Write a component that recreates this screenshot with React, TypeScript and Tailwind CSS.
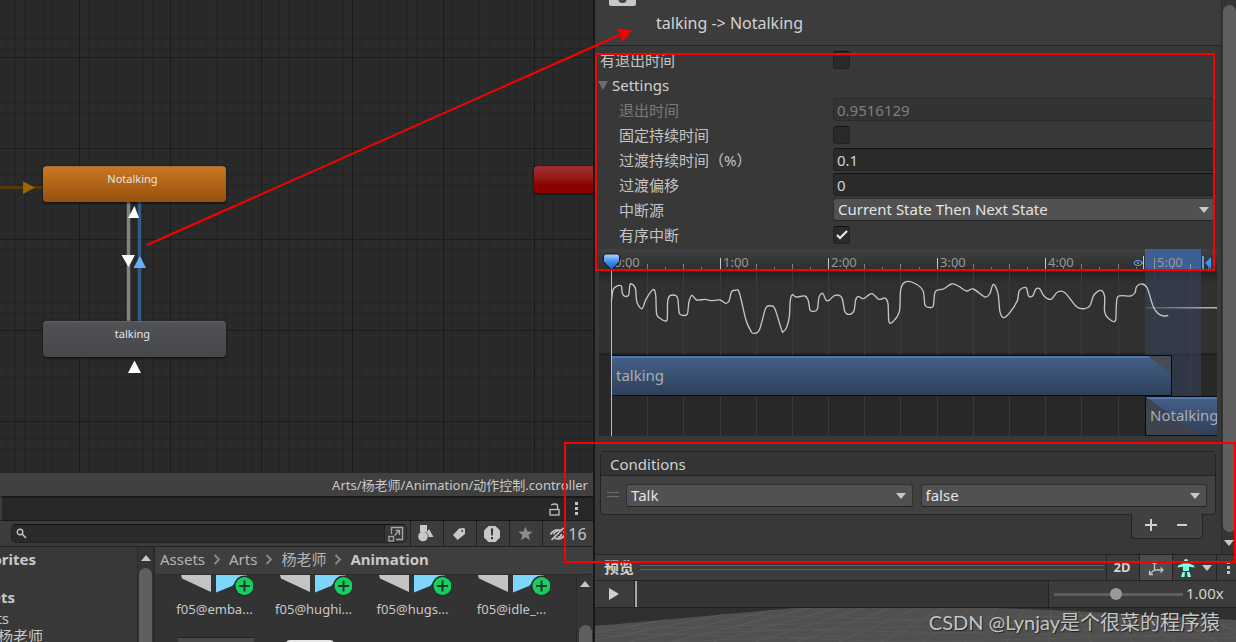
import type { ReactNode } from 'react';

const UI_FONT = "font-['Noto_Sans','Noto_Sans_CJK_SC',sans-serif]";

const curvePoints = [
  [64, 185], [69, 150], [78, 140], [90, 136], [95, 140], [97, 160], [105, 169], [116, 165], [119, 140], [123, 131],
  [136, 145], [141, 187], [156, 206], [168, 178], [189, 149], [197, 165], [200, 222], [212, 236], [227, 243], [232, 235],
  [233, 185], [240, 167], [258, 167], [264, 180], [268, 220], [280, 226], [292, 222], [297, 185], [306, 166], [320, 180],
  [345, 178], [362, 182], [390, 180], [407, 190], [417, 183], [425, 155], [437, 151], [448, 158], [468, 240], [483, 274],
  [492, 280], [508, 270], [527, 205], [541, 198], [554, 205], [575, 270], [580, 275], [590, 262], [598, 230], [601, 180],
  [608, 164], [618, 171], [645, 168], [655, 182], [660, 210], [670, 214], [682, 208], [687, 172], [698, 160], [708, 180],
  [717, 181], [735, 166], [755, 172], [765, 215], [778, 223], [792, 212], [797, 180], [805, 169], [820, 176], [845, 161],
  [867, 178], [885, 174], [894, 190], [897, 245], [910, 244], [928, 215], [932, 150], [943, 128], [965, 126], [998, 150],
  [1005, 195], [1018, 202], [1030, 198], [1036, 155], [1060, 147], [1085, 132], [1105, 138], [1130, 153], [1150, 147], [1185, 171],
  [1200, 160], [1210, 133], [1224, 160], [1230, 215], [1241, 233], [1260, 217], [1282, 182], [1288, 152], [1308, 143], [1316, 168],
  [1328, 168], [1338, 147], [1350, 147], [1362, 168], [1383, 178], [1403, 156], [1425, 158], [1460, 200], [1485, 206], [1500, 197],
  [1512, 165], [1533, 151], [1544, 170], [1544, 215], [1555, 235], [1576, 243], [1579, 200], [1585, 169], [1622, 168], [1635, 158],
  [1640, 140], [1657, 132], [1672, 145], [1690, 200], [1705, 221], [1722, 228], [1735, 226],
];

const smoothPath = (points: number[][]) => {
  let d = `M${points[0][0]} ${points[0][1]}`;
  for (let i = 0; i < points.length - 1; i++) {
    const p0 = points[Math.max(i - 1, 0)];
    const p1 = points[i];
    const p2 = points[i + 1];
    const p3 = points[Math.min(i + 2, points.length - 1)];
    d += `C${p1[0] + (p2[0] - p0[0]) / 6} ${p1[1] + (p2[1] - p0[1]) / 6} ${p2[0] - (p3[0] - p1[0]) / 6} ${p2[1] - (p3[1] - p1[1]) / 6} ${p2[0]} ${p2[1]}`;
  }
  return d;
};

const Kebab = () => (
  <svg width="4" height="14" viewBox="0 0 4 14" fill="#c4c4c4">
    <rect width="3" height="3" />
    <rect y="5" width="3" height="3" />
    <rect y="10" width="3" height="3" />
  </svg>
);

const StateNode = ({ name, className }: { name: string; className: string }) => (
  <div
    className={`absolute left-[43px] h-9 w-[183px] rounded border-t border-white/15 bg-gradient-to-b pr-1 text-center text-[11px] leading-6 text-[#e6e6e6] shadow-[0_1px_3px_rgba(0,0,0,0.7)] ${className}`}
  >
    {name}
  </div>
);

const AnimatorGraph = () => (
  <div className="relative min-h-0 flex-1 overflow-hidden bg-[#2a2a2a]">
    <svg className="absolute inset-0 h-full w-full">
      <defs>
        <pattern id="grid" x="79" y="57" width="91" height="91" patternUnits="userSpaceOnUse">
          <path
            d="M9.5 0V91M18.5 0V91M27.5 0V91M36.5 0V91M46.5 0V91M55.5 0V91M64.5 0V91M73.5 0V91M82.5 0V91M0 9.5H91M0 18.5H91M0 27.5H91M0 36.5H91M0 46.5H91M0 55.5H91M0 64.5H91M0 73.5H91M0 82.5H91"
            stroke="#252525"
          />
          <path d="M.5 0V91M0 .5H91" stroke="#1c1c1c" />
        </pattern>
      </defs>
      <rect width="100%" height="100%" fill="url(#grid)" />
      <path d="M0 187.5H43" stroke="#513806" strokeWidth="3" />
      <path d="M23 181.5L35 187.5L23 194z" fill="#9a6400" />
      <path d="M128.5 200V322" stroke="#838383" strokeWidth="3.5" />
      <path d="M139.5 200V322" stroke="#335a85" strokeWidth="3.5" />
      <path d="M134.5 206L139 218H128z" fill="#fff" />
      <path d="M121.5 255H135L128.5 267z" fill="#fff" />
      <path d="M140 256L146 268H133.5z" fill="#66b0ff" />
      <path d="M134.5 360.5L141 373H128z" fill="#fff" />
    </svg>
    <StateNode name="Notalking" className="top-[166px] from-[#c97620] to-[#96510d]" />
    <StateNode name="talking" className="top-[321px] from-[#505256] to-[#45474a]" />
    <div className="absolute left-[534px] top-[166px] h-[27px] w-[183px] rounded border-t border-white/15 bg-gradient-to-b from-[#a03030] to-[#8b0000] to-70% shadow-[0_1px_3px_rgba(0,0,0,0.7)]" />
  </div>
);

const ToolButton = ({ label, children }: { label: string; children: ReactNode }) => (
  <button aria-label={label} className="flex w-[33px] items-center justify-center border-l border-[#232323] pr-[2px]">
    {children}
  </button>
);

const ProjectToolbar = () => (
  <div className="flex h-[26px] items-stretch border-b border-[#232323] bg-[#3c3c3c] pl-[11px]">
    <div className="my-[3px] mr-[3px] flex flex-1 items-center rounded-[5px] border border-t-[#101010] border-[#222] bg-[#2a2a2a]">
      <svg className="ml-1 shrink-0" width="11" height="11" viewBox="0 0 11 11" fill="none" stroke="#c4c4c4">
        <circle cx="4" cy="4" r="2.8" strokeWidth="1.4" />
        <path d="M6 6L10 10" strokeWidth="1.6" />
      </svg>
      <input aria-label="Search" className="min-w-0 flex-1 bg-transparent px-1 text-sm outline-none" />
      <button aria-label="Open search window" className="flex h-full w-[22px] items-center justify-center rounded-r border-l border-[#222] bg-[#383838]">
        <svg width="16" height="16" viewBox="0 0 16 16" fill="none" stroke="#a8a8a8" strokeWidth="1.3">
          <path d="M3.5 8V1.5H14.5V13.5H8" />
          <rect x="1" y="10.5" width="4.5" height="4.5" />
          <path d="M6.5 9.5L11.5 4.5M7.5 4.5H11.5V9" />
        </svg>
      </button>
    </div>
    <ToolButton label="Search by type">
      <svg width="16" height="17" viewBox="0 0 16 17" fill="#c8c8c8">
        <rect x="2" y="0" width="7" height="7" />
        <circle cx="5" cy="11.5" r="4.8" />
        <path d="M11 4L15.5 12H10.5A6 6 0 0 0 8.5 7.5z" />
      </svg>
    </ToolButton>
    <ToolButton label="Search by label">
      <svg width="14" height="14" viewBox="0 0 14 14" fill="#c8c8c8">
        <path fillRule="evenodd" d="M7 1.5L12 1L13 2V7L5.5 13L1 8zM10.2 3A1 1 0 1 0 10.3 5A1 1 0 1 0 10.2 3z" />
      </svg>
    </ToolButton>
    <ToolButton label="Search by import log">
      <svg width="18" height="18" viewBox="0 0 18 18">
        <path d="M5.5 1H12.5L17 5.5V12.5L12.5 17H5.5L1 12.5V5.5z" fill="#c8c8c8" />
        <path d="M7.8 3.5H10.2L9.8 10.5H8.2zM8 12H10V14.2H8z" fill="#333" />
      </svg>
    </ToolButton>
    <ToolButton label="Save search">
      <svg width="15" height="15" viewBox="0 0 15 15" fill="#8c8c8c">
        <path d="M7.5 .5L9.4 5.5L14.7 5.7L10.6 9L12 14.2L7.5 11.3L3 14.2L4.4 9L.3 5.7L5.6 5.5z" />
      </svg>
    </ToolButton>
    <button className="flex w-[51px] items-center justify-center gap-px border-l border-[#232323] text-base leading-6 text-[#c4c4c4]">
      <svg width="18" height="14" viewBox="0 0 18 14" fill="none" stroke="#c4c4c4" strokeWidth="1.7">
        <path d="M1.5 7.5C4 3.5 8 2 12 3.5M5.5 11C10 13 14 11 16.5 7C16 6 15.2 5 14.5 4.5" />
        <path d="M5 7.5C5 5.5 7 4 9.5 4M9 10.5C11.5 10 12.5 8.500 12.5 7" />
        <path d="M2.5 13L14.5 1" />
      </svg>
      16
    </button>
  </div>
);

const Breadcrumbs = () => (
  <nav className="flex h-7 items-center gap-[9px] border-b border-[#2c2c2c] bg-[#3e3e3e] pb-[3px] pl-[5px] text-[15px] leading-6 text-[#b4b4b4]">
    {['Assets', 'Arts', '杨老师', 'Animation'].map((name, i) => (
      <span key={name} className="flex items-center gap-[9px]">
        {i > 0 && (
          <svg width="6" height="11" viewBox="0 0 6 11" fill="none" stroke="#8e8e8e" strokeWidth="1.8">
            <path d="M.5 1L5 5.5L.5 10" />
          </svg>
        )}
        <a href="#" className={i === 3 ? 'font-bold text-[#c8c8c8]' : ''}>{name}</a>
      </span>
    ))}
  </nav>
);

const AssetItem = ({ name }: { name: string }) => (
  <div className="flex w-[99px] shrink-0 flex-col items-center">
    <svg width="76" height="23" viewBox="0 0 76 23">
      <path d="M4 0H34V17L5 3.5z" fill="#c4c4c4" />
      <path d="M39 0H70L59 7L55 11L39 17.5z" fill="#7fd6fd" />
      <circle cx="67.5" cy="11" r="10.5" fill="#2d2d2d" />
      <circle cx="67.5" cy="11" r="9" fill="#16cf60" />
      <path d="M67.5 5.5V16.5M62 11H73" stroke="#1f3a29" strokeWidth="2" />
    </svg>
    <span className="text-[13px] leading-[22px] text-[#c8c8c8]">{name}</span>
  </div>
);

const ProjectPanel = () => (
  <div className="flex h-[95px] bg-[#383838] text-[15px] text-[#c8c8c8]">
    <div className="w-[137px] overflow-hidden whitespace-nowrap">
      <div className="flex h-6 w-[36px] items-center justify-end overflow-hidden font-bold">Favorites</div>
      <div className="mt-[14px] flex h-6 w-[15px] items-center justify-end overflow-hidden font-bold">Assets</div>
      <div className="flex h-[17px] w-[9px] items-center justify-end overflow-hidden leading-4">Arts</div>
      <div className="flex h-5 w-[43px] items-center justify-end overflow-hidden leading-5">杨老师</div>
    </div>
    <div className="flex w-[18px] flex-col items-center border-l border-r-2 border-[#2a2a2a] bg-[#353535]">
      <svg className="mt-2" width="10" height="6" viewBox="0 0 10 6" fill="#c8c8c8"><path d="M5 0L10 6H0z" /></svg>
      <div className="mt-[7px] w-[13px] flex-1 rounded-t-full bg-[#5f5f5f]" />
    </div>
    <div className="flex min-w-0 flex-1 flex-col">
      <Breadcrumbs />
      <div className="flex flex-1 overflow-hidden bg-[#333]">
        <div className="min-w-0 flex-1 overflow-hidden pl-[10px]">
          <div className="flex">
            {['f05@emba...', 'f05@hughi...', 'f05@hugs...', 'f05@idle_...'].map((name) => (
              <AssetItem key={name} name={name} />
            ))}
          </div>
          <div className="mt-[17px] flex items-start gap-8 pl-[13px]">
            <div className="h-2 w-[76px] border-t border-[#222] bg-[#4b4b4b]" />
            <div className="mt-[3px] h-2 w-[48px] rounded-t bg-[#e8e8e8]" />
          </div>
        </div>
        <div className="flex w-[17px] flex-col items-center border-l border-[#2a2a2a] bg-[#353535]">
          <svg className="mt-[6px] shrink-0" width="10" height="6" viewBox="0 0 10 6" fill="#c8c8c8"><path d="M5 0L10 6H0z" /></svg>
          <div className="mt-[38px] h-8 w-[13px] shrink-0 rounded-full bg-[#5f5f5f]" />
        </div>
      </div>
    </div>
  </div>
);

const LeftColumn = () => (
  <div className="flex min-w-0 flex-[593] flex-col">
    <AnimatorGraph />
    <div className="flex h-[23px] items-center justify-end bg-[#404040] pr-[5px] pt-[2px] text-[13px] text-[#c8c8c8]">
      Arts/杨老师/Animation/动作控制.controller
    </div>
    <div className="flex h-[25px] items-center justify-end gap-[15px] border-l-2 border-t-2 border-b border-[#191919] border-l-[#3c3c3c] bg-[#282828] pr-[14px]">
      <button aria-label="Lock">
        <svg width="11" height="13" viewBox="0 0 11 13" fill="none" stroke="#c4c4c4" strokeWidth="1.3">
          <rect x="1" y="6.5" width="9" height="5.5" />
          <path d="M2.5 2.5C2.5 .5 8.5 .5 8.5 2.5V6" />
        </svg>
      </button>
      <button aria-label="Panel menu"><Kebab /></button>
    </div>
    <ProjectToolbar />
    <ProjectPanel />
  </div>
);

const Row = ({ id, label, indent = true, muted = false, children }: { id: string; label: string; indent?: boolean; muted?: boolean; children: ReactNode }) => (
  <div className="flex h-[25px] items-center">
    <label
      htmlFor={id}
      className={`w-[238px] shrink-0 leading-6 ${indent ? 'pl-6' : 'pl-[5px]'} ${muted ? 'text-[#7a7a7a]' : 'text-[#c4c4c4]'}`}
    >
      {label}
    </label>
    {children}
  </div>
);

const Check = ({ id, checked = false }: { id: string; checked?: boolean }) => (
  <span className="relative flex">
    <input
      id={id}
      type="checkbox"
      defaultChecked={checked}
      className="peer h-[18px] w-[17px] appearance-none rounded-[3px] border border-t-[#111] border-[#222] bg-[#2a2a2a]"
    />
    <svg className="pointer-events-none absolute left-[3px] top-1 hidden peer-checked:block" width="12" height="10" viewBox="0 0 12 10" fill="none" stroke="#eee" strokeWidth="2">
      <path d="M1 5L4 8L11 1" />
    </svg>
  </span>
);

const Field = ({ id, value, disabled = false }: { id: string; value: string; disabled?: boolean }) => (
  <input
    id={id}
    defaultValue={value}
    disabled={disabled}
    className="h-[23px] min-w-0 flex-1 rounded-[3px] border border-t-[#111] border-[#222] bg-[#2a2a2a] px-[3px] text-[#d2d2d2] outline-none disabled:border-[#2a2a2a] disabled:bg-[#333] disabled:text-[#7f7f7f]"
  />
);

const Dropdown = ({ id, label, value }: { id: string; label?: string; value: string }) => (
  <div className="relative min-w-0 flex-1">
    <select
      id={id}
      aria-label={label}
      className="block h-[23px] w-full appearance-none rounded-[3px] border border-[#303030] border-b-[#242424] bg-[#515151] px-1 pb-px leading-5 text-[#e4e4e4] outline-none"
    >
      <option>{value}</option>
    </select>
    <svg className="pointer-events-none absolute right-[7px] top-[9px]" width="10" height="6" viewBox="0 0 10 6" fill="#c8c8c8">
      <path d="M0 0H10L5 6z" />
    </svg>
  </div>
);

const Timeline = () => {
  const ticks = Array.from({ length: 34 }, (_, i) => Math.round(12 + i * 18.09));
  return (
    <svg className="block h-[187px] w-full" fontSize="13" fill="none">
      <defs>
        <linearGradient id="ruler" x2="0" y2="1">
          <stop stopColor="#404040" />
          <stop offset="1" stopColor="#2c2c2c" />
        </linearGradient>
        <linearGradient id="clip" x2="0" y2="1">
          <stop stopColor="#456189" />
          <stop offset="1" stopColor="#2e405a" />
        </linearGradient>
        <linearGradient id="shade" x2="0" y2="1">
          <stop stopColor="#222" />
          <stop offset="1" stopColor="#303030" />
        </linearGradient>
        <linearGradient id="head" x2="0" y2="1">
          <stop stopColor="#b6d6ff" />
          <stop offset=".5" stopColor="#3b8bf0" />
          <stop offset="1" stopColor="#0064e0" />
        </linearGradient>
        <linearGradient id="fade">
          <stop stopColor="#bbb" stopOpacity=".2" />
          <stop offset="1" stopColor="#bbb" />
        </linearGradient>
      </defs>
      <rect width="100%" height="187" fill="#282828" />
      <rect width="100%" height="22" fill="url(#ruler)" />
      <rect y="22" width="100%" height="83" fill="#303030" />
      <rect y="22" width="100%" height="12" fill="url(#shade)" />
      <rect y="104" width="100%" height="3" fill="#222" />
      {ticks.map((x, i) => (
        <g key={x}>
          {i > 0 && i % 2 === 0 && <path d={`M${x + 0.5} 22V187`} stroke="#3b3b3b" />}
          <path d={`M${x + 0.5} ${i % 6 === 0 ? 9 : i % 2 === 0 ? 15 : 18}V21`} stroke={i % 6 === 0 ? '#c8c8c8' : '#7c7c7c'} />
        </g>
      ))}
      <rect x="546" width="56" height="22" fill="#3d5f94" />
      <rect x="546" y="22" width="56" height="165" fill="#35465f" fillOpacity=".5" />
      <path d="M555.5 9V21M573.5 18V21M591.5 15V21" stroke="#999" />
      {[0, 1, 2, 3, 4, 5].map((n) => (
        <text key={n} x={Math.round(15 + n * 108.5)} y="18" fill="#979797">{n}:00</text>
      ))}
      <rect x="546" y="58" width="72" height="1.5" fill="url(#fade)" />
      <g transform="translate(-9 -9) scale(.3333)">
        <path d={smoothPath(curvePoints)} stroke="#c6c6c6" strokeWidth="4" />
      </g>
      <rect x="12" y="106" width="561" height="41" fill="#080a0e" />
      <rect x="13" y="107" width="559" height="39" fill="url(#clip)" />
      <rect x="13" y="107" width="559" height="2" fill="#5078ae" />
      <path d="M549 107H572V125z" fill="#474c54" />
      <rect x="546" y="147" width="100%" height="40" fill="#080a0e" />
      <rect x="547" y="148" width="100%" height="38" fill="url(#clip)" />
      <rect x="547" y="148" width="100%" height="2" fill="#5078ae" />
      <path d="M547 148L602 186H547z" fill="#3d4450" />
      <g fontSize="15" fill="#a9adb4">
        <text x="17" y="132">talking</text>
        <text x="551" y="172">Notalking</text>
      </g>
      <path d="M12.5 20V187" stroke="#bdbdbd" />
      <path d="M6 5H19L20.5 7V12.5L12.5 21L4.5 12.5V7z" fill="url(#head)" stroke="#101722" />
      <ellipse cx="539" cy="14" rx="4" ry="2.5" stroke="#64a8f5" />
      <circle cx="539" cy="14" r="1" fill="#64a8f5" />
      <path d="M543 14H545" stroke="#64a8f5" strokeWidth="1.5" />
      <path d="M544.5 7V20" stroke="#a8ccf8" />
      <path d="M604 7V21" stroke="#80b8ff" strokeWidth="1.5" />
      <path d="M612.5 7V21L605.5 14z" fill="#3f93f5" stroke="#101722" strokeWidth=".6" />
    </svg>
  );
};

const Conditions = () => (
  <section className="mt-[15px] px-[5px]">
    <div className="rounded border border-[#242424] bg-[#414141]">
      <h2 className="h-6 border-b border-[#242424] bg-[#353535] pl-[9px] leading-6">Conditions</h2>
      <div className="flex h-[38px] items-center gap-2 pr-2">
        <svg className="ml-[6px] -mr-px shrink-0" width="12" height="6" viewBox="0 0 12 6" stroke="#6c6c6c">
          <path d="M0 .5H12M0 4.5H12" />
        </svg>
        <Dropdown id="parameter" label="Parameter" value="Talk" />
        <Dropdown id="value" label="Value" value="false" />
      </div>
    </div>
    <div className="relative -mt-px ml-auto mr-[13px] flex h-[25px] w-[72px] items-center justify-center gap-[19px] rounded-b border border-t-0 border-[#242424] bg-[#414141] pb-[2px] pr-[2px]">
      <button aria-label="Add condition">
        <svg width="12" height="12" viewBox="0 0 12 12" stroke="#d0d0d0" strokeWidth="2"><path d="M0 6H12M6 0V12" /></svg>
      </button>
      <button aria-label="Remove condition">
        <svg width="12" height="12" viewBox="0 0 12 12" stroke="#d0d0d0" strokeWidth="2"><path d="M1 6H11" /></svg>
      </button>
    </div>
  </section>
);

const floorRays = Array.from({ length: 81 }, (_, i) => -1100 + i * 42);

const Preview = () => (
  <section className="flex min-h-0 flex-1 flex-col border-t border-[#232323] bg-[#3c3c3c]">
    <div className="flex h-[26px] shrink-0 items-stretch border-b border-[#232323]">
      <h2 className="pl-[9px] pr-[6px] font-bold leading-6">预览</h2>
      <div className="my-auto mr-[2px] h-[5px] flex-1 border-y border-[#626262]" />
      <button className="w-[33px] border-l border-[#232323] pr-[2px] text-[13px] font-bold">2D</button>
      <button aria-label="Toggle pivot" className="flex w-[33px] items-center justify-center border-l border-[#232323] bg-[#4c4c4c]">
        <svg width="16" height="16" viewBox="0 0 16 16" fill="none" stroke="#c4c4c4" strokeWidth="1.3">
          <path d="M6.5 10V1.5M4.5 3.5L6.5 1.5L8.5 3.5M6.5 10H15M12.5 7.5L15 10L12.5 12.5M6.5 10L1.5 14M1.5 10.5V14.5H5" />
        </svg>
      </button>
      <button aria-label="Avatar" className="flex w-[44px] items-center justify-center gap-[7px] border-l border-[#232323]">
        <svg width="18" height="18" viewBox="0 0 18 18" fill="#7fffe6">
          <circle cx="9" cy="2" r="2" />
          <path d="M6 4.5H12L17 6.5L17.5 8.5L12 7.8V12H6V7.8L.5 8.5L1 6.5zM5.5 13H8L7.5 18H4zM10 13H12.5L14 18H10.5z" />
        </svg>
        <svg width="10" height="6" viewBox="0 0 10 6" fill="#c8c8c8"><path d="M0 0H10L5 6z" /></svg>
      </button>
      <button aria-label="Preview menu" className="flex w-5 items-center justify-center border-l border-[#232323] pl-1"><Kebab /></button>
    </div>
    <div className="flex h-[27px] shrink-0 items-stretch border-b border-[#232323] bg-[#353535]">
      <button aria-label="Play" className="flex w-10 items-center border-r border-[#232323] bg-[#3c3c3c] pl-[14px]">
        <svg width="10" height="12" viewBox="0 0 10 12" fill="#d0d0d0"><path d="M0 0L10 6L0 12z" /></svg>
      </button>
      <div className="w-[2px] bg-[#a8a8a8]" />
      <div className="flex-1" />
      <div className="flex w-[188px] items-center border-l border-[#232323] bg-[#3c3c3c] pl-[5px]">
        <input
          type="range"
          aria-label="Preview speed"
          defaultValue="48"
          className="h-[3px] w-[129px] appearance-none bg-[#5e5e5e] [&::-webkit-slider-thumb]:h-3 [&::-webkit-slider-thumb]:w-3 [&::-webkit-slider-thumb]:appearance-none [&::-webkit-slider-thumb]:rounded-full [&::-webkit-slider-thumb]:bg-[#999]"
        />
        <span className="pb-[2px] pl-[3px]">1.00x</span>
      </div>
    </div>
    <svg className="min-h-0 w-full flex-1 bg-[#303030]" viewBox="0 0 641 34" preserveAspectRatio="xMidYMin slice">
      <defs>
        <clipPath id="floor"><path d="M0 18L200 0H400L480 3L641 12V34H0z" /></clipPath>
      </defs>
      <g clipPath="url(#floor)">
        <rect width="641" height="34" fill="#505050" />
        {floorRays.map((x) => (
          <path key={x} d={`M460 -60L${x} 34`} stroke="#646464" strokeWidth=".6" />
        ))}
        <path d="M0 22L641 3M0 28L641 9M0 36L641 16M120 40L641 25M0 18L641 30M0 24L500 40M100 6L641 20" stroke="#5c5c5c" strokeWidth=".6" />
      </g>
    </svg>
  </section>
);

const Inspector = () => (
  <div className="flex min-w-0 flex-[641] flex-col border-l-2 border-[#191919] text-[15px] text-[#d2d2d2]">
    <div className="flex h-[554px] shrink-0 bg-[#383838]">
      <div className="min-w-0 flex-1">
        <header className="flex h-[46px] items-start border-b border-[#232323] bg-[#3c3c3c] pl-[14px]">
          <svg width="27" height="6" viewBox="0 0 27 6">
            <path d="M0 0H27V4Q27 6 25 6H2Q0 6 0 4z" fill="#c8c8c8" />
            <path d="M9.5 0A4 3 0 0 0 17.5 0z" fill="#3c4c44" />
          </svg>
          <h1 className="mt-[11px] pl-5 text-base leading-6">talking -&gt; Notalking</h1>
        </header>
        <form className="pr-[5px] pt-px">
          <Row id="hasExit" label="有退出时间" indent={false}><Check id="hasExit" /></Row>
          <button type="button" className="flex h-[25px] items-center gap-1 pl-[3px] pt-[2px]">
            <svg width="10" height="9" viewBox="0 0 10 9" fill="#6e6e6e"><path d="M0 0H10L5 9z" /></svg>
            Settings
          </button>
          <Row id="exitTime" label="退出时间" muted><Field id="exitTime" value="0.9516129" disabled /></Row>
          <Row id="fixed" label="固定持续时间"><Check id="fixed" /></Row>
          <Row id="duration" label="过渡持续时间（%）"><Field id="duration" value="0.1" /></Row>
          <Row id="offset" label="过渡偏移"><Field id="offset" value="0" /></Row>
          <Row id="source" label="中断源"><Dropdown id="source" value="Current State Then Next State" /></Row>
          <Row id="ordered" label="有序中断"><Check id="ordered" checked /></Row>
        </form>
        <div className="mt-[2px] px-1">
          <Timeline />
        </div>
        <Conditions />
      </div>
      <div className="flex w-[15px] flex-col items-end border-l border-[#2c2c2c] bg-[#353535]">
        <div className="mt-[5px] w-[13px] flex-1 rounded-full bg-[#5f5f5f]" />
        <svg className="my-2 mr-[2px]" width="10" height="6" viewBox="0 0 10 6" fill="#c8c8c8"><path d="M0 0H10L5 6z" /></svg>
      </div>
    </div>
    <Preview />
  </div>
);

const Annotations = () => (
  <svg className="pointer-events-none absolute inset-0 h-full w-full" fill="none" stroke="#fb0000" strokeWidth="2">
    <rect x="596" y="54" width="618" height="216" />
    <rect x="565" y="443" width="670" height="119" />
    <path d="M147 245L622 34" />
    <path d="M618 29L631 31L623 41z" fill="#fb0000" strokeWidth="1" />
  </svg>
);

export default function App() {
  return (
    <div className={`relative flex h-screen w-full overflow-hidden bg-[#383838] ${UI_FONT}`}>
      <LeftColumn />
      <Inspector />
      <Annotations />
      <p className="absolute bottom-1 right-4 font-['Lato','Noto_Sans_CJK_SC',sans-serif] text-xl leading-8 text-[#c4c4c4] [text-shadow:1px_1px_1px_#222]">
        CSDN @Lynjay是个很菜的程序猿
      </p>
    </div>
  );
}
